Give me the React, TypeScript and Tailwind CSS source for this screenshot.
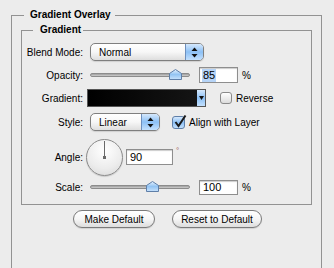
import React from 'react';

const font = { fontFamily: '"Lucida Grande", "Liberation Sans", Arial, sans-serif' };

function UpDown() {
  return (
    <svg width="7" height="11" viewBox="0 0 7 11">
      <polygon points="3.5,0.5 6.5,4 0.5,4" fill="#111" />
      <polygon points="0.5,7 6.5,7 3.5,10.5" fill="#111" />
    </svg>
  );
}

function Popup({ text, className }: { text: string; className: string }) {
  return (
    <div className={`flex h-[18px] items-stretch overflow-hidden rounded-[5px] border border-[#7f7f7f] bg-linear-to-b from-white via-[#f7f7f7] to-[#dedede] shadow-[0_1px_1px_rgba(0,0,0,0.12)] ${className}`}>
      <span className="flex flex-1 items-center pl-[8px] text-[10px] text-black">{text}</span>
      <span className="flex w-[18px] items-center justify-center border-l border-[#6d8fbd] bg-linear-to-b from-[#d5e8fc] via-[#8cc0f5] to-[#c3e0fd]">
        <UpDown />
      </span>
    </div>
  );
}

function Slider({ pos }: { pos: string }) {
  return (
    <div className="relative ml-[7px] h-[14px] w-[100px]">
      <div className="absolute left-0 right-0 top-[5px] h-[4px] rounded-full border border-[#8c8c8c] bg-linear-to-b from-[#9d9d9d] to-[#cfcfcf]" />
      <svg className={`absolute top-[1px] ${pos}`} width="13" height="11" viewBox="0 0 13 11">
        <defs>
          <linearGradient id="th" x1="0" y1="0" x2="0" y2="1">
            <stop offset="0" stopColor="#e6f2ff" />
            <stop offset="0.5" stopColor="#93c4f3" />
            <stop offset="1" stopColor="#c8e2fc" />
          </linearGradient>
        </defs>
        <polygon points="6.5,0.5 12.5,4.5 12.5,10.5 0.5,10.5 0.5,4.5" fill="url(#th)" stroke="#5f7fa8" />
      </svg>
    </div>
  );
}

function Field({ value, className, selected }: { value: string; className: string; selected?: boolean }) {
  return (
    <div className={`flex items-center border border-[#8e8e8e] bg-white pl-[2px] text-[11px] leading-none text-black shadow-[inset_0_1px_1px_rgba(0,0,0,0.2)] ${className}`}>
      <span className={selected ? 'bg-[#b6d4f7] px-[1px] py-[1px]' : 'px-[1px]'}>{value}</span>
    </div>
  );
}

function Label({ children }: { children: React.ReactNode }) {
  return <span className="w-[61px] shrink-0 text-right text-[10px] text-black">{children}</span>;
}

export default function App() {
  return (
    <div className="h-[268px] w-[334px] overflow-hidden bg-[#ececec] pl-[11px] pt-[9px]" style={font}>
      <fieldset className="h-[300px] w-[311px] border border-[#929292] pl-[9px] pr-[9px] pt-[3px]">
        <legend className="ml-[3px] pl-[6px] pr-[4px] text-[10px] font-bold leading-[12px] text-black">Gradient Overlay</legend>
        <fieldset className="border border-[#929292] pb-[10px] pl-0 pt-[7px]">
          <legend className="ml-[11px] pl-[7px] pr-[2px] text-[10px] font-bold leading-[12px] text-black">Gradient</legend>

          <div className="flex h-[18px] items-center">
            <Label>Blend Mode:</Label>
            <Popup text="Normal" className="ml-[7px] w-[114px]" />
          </div>

          <div className="mt-[6px] flex h-[16px] items-center">
            <Label>Opacity:</Label>
            <Slider pos="left-[79px]" />
            <Field value="85" selected className="ml-[9px] h-[16px] w-[39px]" />
            <span className="ml-[4px] text-[10px]">%</span>
          </div>

          <div className="mt-[6px] flex h-[18px] items-center">
            <Label>Gradient:</Label>
            <div className="ml-[4px] flex h-[18px] w-[119px] border border-[#555] bg-[linear-gradient(to_right,#000,#161616)]">
              <div className="flex-1" />
              <span className="flex w-[8px] items-center justify-center bg-linear-to-b from-[#d5e8fc] via-[#8cc0f5] to-[#c3e0fd]">
                <svg width="5" height="4" viewBox="0 0 5 4"><polygon points="0,0 5,0 2.5,4" fill="#111" /></svg>
              </span>
            </div>
            <span className="ml-[14px] h-[12px] w-[12px] rounded-[3px] border border-[#8a8a8a] bg-linear-to-b from-white to-[#dcdcdc]" />
            <span className="ml-[4px] text-[10px]">Reverse</span>
          </div>

          <div className="mt-[6px] flex h-[18px] items-center">
            <Label>Style:</Label>
            <Popup text="Linear" className="ml-[7px] w-[70px]" />
            <span className="relative ml-[12px] h-[13px] w-[13px] rounded-[3px] border border-[#5f7fa8] bg-linear-to-b from-[#d5e8fc] via-[#8cc0f5] to-[#c3e0fd]">
              <svg className="absolute -top-[3px] left-0" width="15" height="15" viewBox="0 0 15 15">
                <path d="M2.5 8 L5.5 12 L12.5 1.5" fill="none" stroke="#1a1a1a" strokeWidth="2" />
              </svg>
            </span>
            <span className="ml-[4px] text-[10px]">Align with Layer</span>
          </div>

          <div className="mt-[7px] flex h-[38px] items-center">
            <Label>Angle:</Label>
            <div className="relative ml-[3px] h-[37px] w-[37px] rounded-full border border-[#8a8a8a] bg-[radial-gradient(circle_at_50%_30%,#ffffff,#ececec_60%,#d6d6d6)] shadow-[0_1px_1px_rgba(0,0,0,0.15)]">
              <div className="absolute left-[17px] top-[1px] h-[17px] w-[1px] bg-[#6a6a6a]" />
              <div className="absolute left-[16px] top-[16px] h-[3px] w-[3px] bg-[#6a6a6a]" />
            </div>
            <Field value="90" className="ml-[3px] h-[16px] w-[47px]" />
            <span className="ml-[3px] -mt-[12px] text-[8px] text-[#9a5a5a]">°</span>
          </div>

          <div className="mt-[4px] flex h-[14px] items-center">
            <Label>Scale:</Label>
            <Slider pos="left-[56px]" />
            <Field value="100" className="ml-[9px] h-[15px] w-[39px]" />
            <span className="ml-[4px] text-[10px]">%</span>
          </div>
        </fieldset>

        <div className="mt-[5px] flex pl-[52px]">
          <button className="h-[18px] w-[82px] rounded-full border border-[#7a7a7a] bg-linear-to-b from-white via-[#f6f6f6] to-[#dddddd] text-[10px] text-black shadow-[0_1px_1px_rgba(0,0,0,0.12)]">Make Default</button>
          <button className="ml-[17px] h-[18px] w-[90px] rounded-full border border-[#7a7a7a] bg-linear-to-b from-white via-[#f6f6f6] to-[#dddddd] text-[10px] text-black shadow-[0_1px_1px_rgba(0,0,0,0.12)]">Reset to Default</button>
        </div>
      </fieldset>
    </div>
  );
}
